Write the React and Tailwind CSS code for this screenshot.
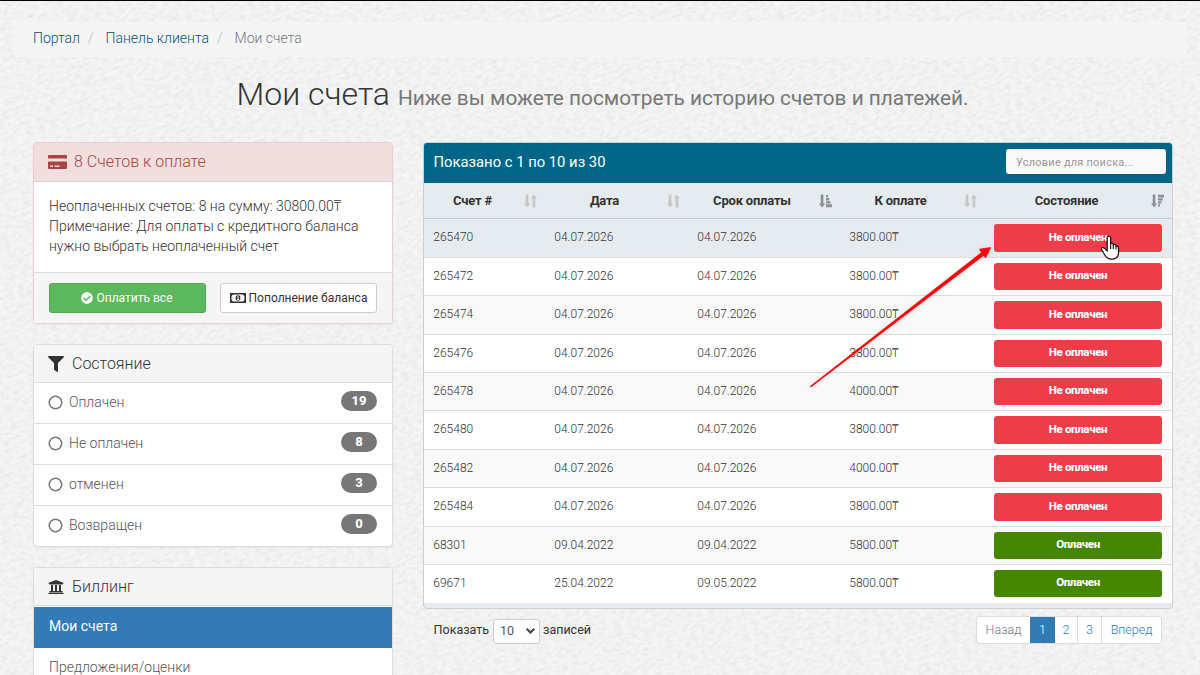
import React from "react";
import { FaFilter, FaCheckCircle, FaUniversity } from "react-icons/fa";

const crumbs = ["Портал", "Панель клиента"];

const statuses = [
  { label: "Оплачен", count: 19 },
  { label: "Не оплачен", count: 8 },
  { label: "отменен", count: 3 },
  { label: "Возвращен", count: 0 },
];

const invoices = [
  { id: "265470", date: "04.07.2026", due: "04.07.2026", total: "3800.00", paid: false },
  { id: "265472", date: "04.07.2026", due: "04.07.2026", total: "3800.00", paid: false },
  { id: "265474", date: "04.07.2026", due: "04.07.2026", total: "3800.00", paid: false },
  { id: "265476", date: "04.07.2026", due: "04.07.2026", total: "3800.00", paid: false },
  { id: "265478", date: "04.07.2026", due: "04.07.2026", total: "4000.00", paid: false },
  { id: "265480", date: "04.07.2026", due: "04.07.2026", total: "3800.00", paid: false },
  { id: "265482", date: "04.07.2026", due: "04.07.2026", total: "4000.00", paid: false },
  { id: "265484", date: "04.07.2026", due: "04.07.2026", total: "3800.00", paid: false },
  { id: "68301", date: "09.04.2022", due: "09.04.2022", total: "5800.00", paid: true },
  { id: "69671", date: "25.04.2022", due: "09.05.2022", total: "5800.00", paid: true },
];

const columns = [
  { label: "Счет #", sort: "none" },
  { label: "Дата", sort: "none" },
  { label: "Срок оплаты", sort: "asc" },
  { label: "К оплате", sort: "none" },
  { label: "Состояние", sort: "desc" },
];

const gridCols = "grid grid-cols-[121px_143px_152px_145px_187px]";

function PaperTexture() {
  return (
    <svg className="absolute inset-0 pointer-events-none" width="1200" height="675">
      <filter id="paper" x="0" y="0" width="100%" height="100%">
        <feTurbulence type="fractalNoise" baseFrequency="0.16 0.3" numOctaves="4" seed="8" />
        <feColorMatrix values="0 0 0 0 0  0 0 0 0 0  0 0 0 0 0  0.11 0 0 0 -0.04" />
      </filter>
      <rect x="-200" y="-300" width="1700" height="1300" filter="url(#paper)" transform="rotate(-18 600 337)" />
    </svg>
  );
}

function SortIcon({ type }) {
  if (type === "none") {
    return (
      <svg width="13" height="14" viewBox="0 0 13 14" fill="#c3c7ca">
        <path d="M1.700 0.500h2.700v9h2L3.100 13.500 0 9.500h1.700zM8.600 13.500h2.700v-9h1.700L9.900 0.500 6.700 4.500h1.900z" />
      </svg>
    );
  }
  return (
    <svg width="13" height="14" viewBox="0 0 13 14" fill="#8b9196">
      <path d="M1.700 0.500h2.700v9h1.900L3.100 13.500 0 9.500h1.700z" />
      {type === "asc" ? (
        <path d="M7 1h2v2.300H7zM7 4h3.200v2.500H7zM7 7.200h4.500v2.400H7zM7 10.300h6v2.900H7z" />
      ) : (
        <path d="M7 0.800h6v2.700H7zM7 4.200h4.800v2.400H7zM7 7.200h3.500v2.400H7zM7 10.300h2v2.300H7z" />
      )}
    </svg>
  );
}

function CardIcon() {
  return (
    <svg width="19" height="14" viewBox="0 0 19 14" fill="#a94442">
      <path d="M1 0h17a1 1 0 0 1 1 1v2.500H0V1a1 1 0 0 1 1-1z" />
      <path
        fillRule="evenodd"
        d="M0 6.500h19V13a1 1 0 0 1-1 1H1a1 1 0 0 1-1-1zM2 10.500v1.500h3v-1.500zM6.500 10.500v1.500h5v-1.500z"
      />
    </svg>
  );
}

function MoneyIcon() {
  return (
    <svg width="16" height="10" viewBox="0 0 16 10">
      <rect x="0.750" y="0.750" width="14.500" height="8.500" fill="none" stroke="#333" strokeWidth="1.500" />
      <path fill="#333" d="M1 1h2.500L1 3.500zM15 1h-2.500L15 3.500zM1 9h2.500L1 6.500zM15 9h-2.500L15 6.500z" />
      <ellipse cx="8" cy="5" rx="2.400" ry="2.700" fill="#333" />
      <path stroke="#fff" strokeWidth="0.900" fill="none" d="M7.200 3.900L8.200 3.500v3M7 6.500h2.200" />
    </svg>
  );
}

function Tenge() {
  return <span className="font-['Open_Sans','Noto_Sans',sans-serif] text-[12.500px] leading-none font-light">₸</span>;
}

function PanelHeading({ icon, children }) {
  return (
    <div className="flex h-[38px] items-center gap-2 border-b border-[#dddddd] bg-[#f5f5f5] pl-[14px] text-[16px] font-light text-[#333]">
      {icon}
      <span>{children}</span>
    </div>
  );
}

function UnpaidPanel() {
  return (
    <div className="h-[182px] overflow-hidden rounded border border-[#ebccd1] bg-white shadow-xs">
      <div className="flex h-[39px] items-center gap-[7px] border-b border-[#ebccd1] bg-[#f2dede] pl-[14px] text-[16px] font-light text-[#a94442]">
        <CardIcon />
        <span>8 Счетов к оплате</span>
      </div>
      <div className="h-[90px] pt-[14px] pl-[15px] text-[14px] leading-5 font-light text-[#333]">
        <p>
          Неоплаченных счетов: 8 на сумму: 30800.00
          <span className="font-['Open_Sans','Noto_Sans',sans-serif] leading-none">₸</span>
        </p>
        <p>Примечание: Для оплаты с кредитного баланса</p>
        <p>нужно выбрать неоплаченный счет</p>
      </div>
      <div className="flex h-[51px] gap-[14px] border-t border-[#dddddd] bg-[#f5f5f5] px-[15px] pt-[10px] text-[12px]">
        <button className="flex h-[30px] w-[157px] items-center justify-center gap-[3px] rounded-[3px] border border-[#4cae4c] bg-[#5cb85c] pr-px text-white">
          <FaCheckCircle size={12} />
          Оплатить все
        </button>
        <button className="flex h-[30px] w-[157px] items-center justify-center gap-[3px] rounded-[3px] border border-[#cccccc] bg-white whitespace-nowrap text-[#333]">
          <MoneyIcon />
          Пополнение баланса
        </button>
      </div>
    </div>
  );
}

function StatusPanel() {
  return (
    <div className="mt-5 overflow-hidden rounded border border-[#dddddd] bg-white shadow-xs">
      <PanelHeading icon={<FaFilter size={16} />}>Состояние</PanelHeading>
      {statuses.map((s) => (
        <a
          key={s.label}
          className="flex h-[41px] items-center border-b border-[#dddddd] px-[15px] pb-[2px] text-[14px] font-light text-[#555] last:h-10 last:border-b-0"
        >
          <span className="size-[13px] rounded-full border-[1.500px] border-[#555] ring-[0.500px] ring-[#777]" />
          <span className="ml-[7px] flex-1">{s.label}</span>
          <span className="mb-[3px] flex h-5 w-9 items-center justify-center rounded-[10px] bg-[#777] text-[13px] font-extrabold text-white">
            {s.count}
          </span>
        </a>
      ))}
    </div>
  );
}

function BillingPanel() {
  return (
    <div className="mt-5 overflow-hidden rounded border border-[#dddddd] bg-white">
      <PanelHeading icon={<FaUniversity size={16} />}>Биллинг</PanelHeading>
      <a className="mt-px flex h-[41px] items-center bg-[#337ab7] pb-[3px] pl-[15px] text-[14px] text-white">
        Мои счета
      </a>
      <a className="flex h-[41px] items-center pb-[3px] pl-[15px] text-[14px] font-light text-[#555]">
        Предложения/оценки
      </a>
    </div>
  );
}

function InvoiceTable() {
  return (
    <div className="h-[467px] w-[750px] overflow-hidden rounded border border-[#c9cfd4] bg-[#e6ebf0]">
      <div className="flex h-10 items-center justify-between bg-[#006687] pr-[6px] pb-[3px] pl-[9.500px]">
        <span className="pt-[2px] text-[14.800px] text-white">Показано с 1 по 10 из 30</span>
        <input
          className="h-[25px] w-[160px] rounded-[3px] bg-[#f9f9f9] px-[10px] pt-[2px] text-[11px] tracking-[0.220px] outline-none placeholder:text-[#999]"
          placeholder="Условие для поиска..."
        />
      </div>
      <div className={`${gridCols} h-[36.400px] border-b border-[#c5cbd0]`}>
        {columns.map((c) => (
          <div key={c.label} className="flex items-center pr-2 pl-[7px] text-[13px] font-bold text-[#333]">
            <span className="flex-1 text-center tracking-[-0.200px] whitespace-nowrap">{c.label}</span>
            <span className="ml-[10px]">
              <SortIcon type={c.sort} />
            </span>
          </div>
        ))}
      </div>
      {invoices.map((inv, i) => (
        <div
          key={inv.id}
          className={`${gridCols} h-[38.400px] border-b border-[#dddddd] text-[12px] font-light text-[#333] last:border-b-0 ${
            i === 0 ? "bg-[#e6ebf0]" : i % 2 ? "bg-white" : "bg-[#f9f9f9]"
          }`}
        >
          <span className="pt-[9px] pl-[9.300px]">{inv.id}</span>
          <span className="pt-[9px] pl-[9.300px]">{inv.date}</span>
          <span className="pt-[9px] pl-[9.300px]">{inv.due}</span>
          <span className="pt-[9px] pl-[9.300px]">
            {inv.total}
            <Tenge />
          </span>
          <span className="pt-[5px] pl-[9px]">
            <span
              className={`flex h-[27.500px] w-[168px] items-center justify-center rounded-[3px] pb-[1.500px] text-[11.500px] font-extrabold tracking-[-0.350px] text-white ${
                inv.paid ? "bg-[#468500]" : "bg-[#ee3d48]"
              }`}
            >
              {inv.paid ? "Оплачен" : "Не оплачен"}
            </span>
          </span>
        </div>
      ))}
    </div>
  );
}

function TableFooter() {
  return (
    <div className="flex justify-between pt-[7px] pr-[11px] pl-[10.600px]">
      <div className="flex h-[28px] items-center text-[12.500px] text-[#333]">
        <span>Показать</span>
        <span className="mt-[2px] ml-1 flex h-[25px] w-[47px] items-center justify-between rounded-[3px] border border-[#cccccc] bg-white pr-1 pl-[6px] text-[#555]">
          10
          <svg width="9" height="6" viewBox="0 0 9 6" fill="none" stroke="#444" strokeWidth="2">
            <path d="M0.700 0.700L4.500 4.500L8.300 0.700" />
          </svg>
        </span>
        <span className="ml-[3px]">записей</span>
      </div>
      <div className="flex h-7 overflow-hidden rounded-[3px] border border-[#dddddd] bg-white text-[12.500px] font-light text-[#337ab7]">
        <span className="flex w-[53px] items-center justify-center text-[#777]">Назад</span>
        <span className="-my-px flex w-[25px] items-center justify-center bg-[#337ab7] text-white">1</span>
        <span className="flex w-[23px] items-center justify-center border-r border-[#dddddd]">2</span>
        <span className="flex w-6 items-center justify-center border-r border-[#dddddd]">3</span>
        <span className="flex w-[59px] items-center justify-center">Вперед</span>
      </div>
    </div>
  );
}

function Pointer() {
  return (
    <svg className="absolute top-[234px] left-[1100px]" width="20" height="26" viewBox="0 0 20 26">
      <path
        d="M7.200 15.500V3.100C7.200 0.600 10.600 0.600 10.600 3.100V9.200C11 7.600 13.300 7.900 13.300 9.600V10.200C13.900 8.900 16 9.300 16 10.900V11.500C16.800 10.500 18.500 11.100 18.500 12.700V17.500C18.500 22 15.500 24.200 11.500 24.200C7.800 24.200 6 22.300 4.500 19.500L1.700 14.800C0.800 13 2.900 11.800 4.300 13.200L7.200 16.100Z"
        fill="#fff"
        stroke="#111"
        strokeWidth="1.200"
        strokeLinejoin="round"
      />
      <path d="M10.600 9v5M13.300 10v4M16 11v3.500" stroke="#111" strokeWidth="1.100" fill="none" />
    </svg>
  );
}

function RedArrow() {
  return (
    <svg className="absolute top-[239px] left-[800px] drop-shadow-sm" width="200" height="155" viewBox="0 0 200 155">
      <path
        d="M10.300 146.300L181.500 12.600L179.500 9.200L190.700 7.600L185.700 17.800L183.500 15.500L10.900 147Z"
        fill="#f5070a"
        stroke="#f5070a"
        strokeWidth="0.700"
      />
    </svg>
  );
}

export default function App() {
  return (
    <div className="relative h-[675px] w-[1200px] overflow-hidden border-t border-black bg-[#f5f5f5] font-['Roboto','Liberation_Sans',sans-serif]">
      <PaperTexture />
      <div className="relative pt-[21px]">
        <nav className="mx-[13px] flex h-[35px] items-center rounded bg-[#f5f5f5] pb-[2px] pl-5 text-[14px] font-light">
          {crumbs.map((c) => (
            <span key={c} className="text-[#005580]">
              {c}
              <span className="pr-3 pl-2 text-[#bbb]">/</span>
            </span>
          ))}
          <span className="text-[#777]">Мои счета</span>
        </nav>

        <h1 className="mt-[13px] flex h-[46px] items-baseline justify-center gap-[8px] pl-[5px] text-[32px] font-light text-[#333]">
          Мои счета
          <small className="text-[20.800px] font-normal text-[#777]">
            Ниже вы можете посмотреть историю счетов и платежей.
          </small>
        </h1>

        <div className="mt-[26px] flex pl-[33px]">
          <aside className="w-[360px]">
            <UnpaidPanel />
            <StatusPanel />
            <BillingPanel />
          </aside>
          <main className="ml-[30px] w-[750px]">
            <InvoiceTable />
            <TableFooter />
          </main>
        </div>
      </div>
      <RedArrow />
      <Pointer />
    </div>
  );
}
